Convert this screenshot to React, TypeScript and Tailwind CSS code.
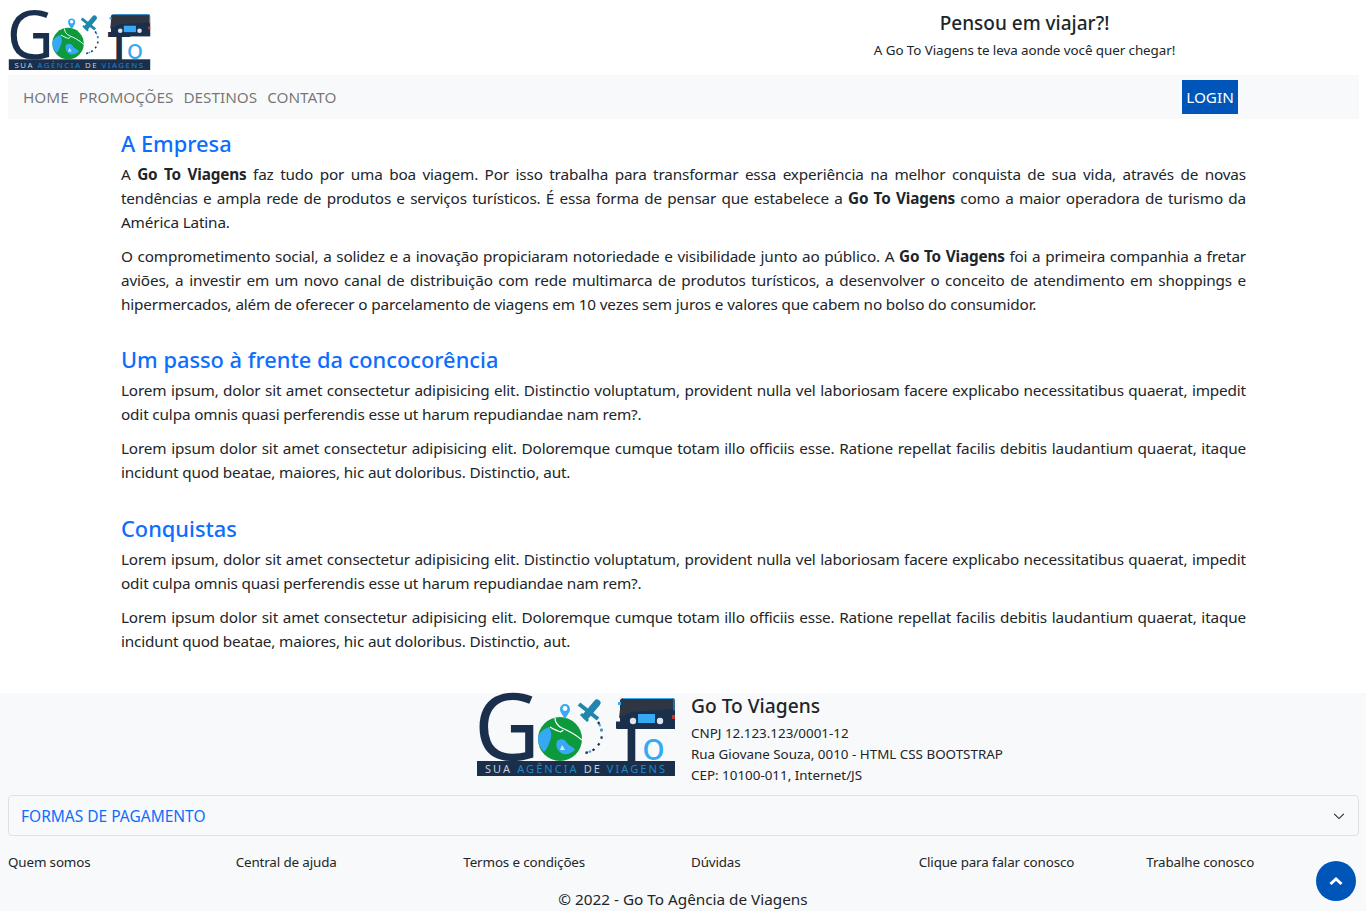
const lorem1 =
  "Lorem ipsum, dolor sit amet consectetur adipisicing elit. Distinctio voluptatum, provident nulla vel laboriosam facere explicabo necessitatibus quaerat, impedit odit culpa omnis quasi perferendis esse ut harum repudiandae nam rem?.";
const lorem2 =
  "Lorem ipsum dolor sit amet consectetur adipisicing elit. Doloremque cumque totam illo officiis esse. Ratione repellat facilis debitis laudantium quaerat, itaque incidunt quod beatae, maiores, hic aut doloribus. Distinctio, aut.";

const footerLinks = [
  "Quem somos",
  "Central de ajuda",
  "Termos e condições",
  "Dúvidas",
  "Clique para falar conosco",
  "Trabalhe conosco",
];

function Logo({ className }: { className: string }) {
  return (
    <svg viewBox="0 0 198 84" className={className}>
      <text x="-3" y="68" fontSize="94" fill="#1a2f4b" textLength="66" lengthAdjust="spacingAndGlyphs" fontFamily="Noto Sans, sans-serif">
        G
      </text>
      <text x="140" y="69" fontSize="52" fill="#1a2f4b" stroke="#1a2f4b" strokeWidth="3" fontFamily="Noto Sans, sans-serif">
        T
      </text>
      <rect x="140" y="32" width="58" height="5" fill="#1a2f4b" />
      <text x="165" y="68" fontSize="38" fill="#36a9f5" fontFamily="Noto Sans, sans-serif">
        o
      </text>
      {/* globe */}
      <circle cx="83" cy="47" r="22" fill="#0c9a3c" />
      <path d="M61 46c0-4 5-9 11-11 3 5 3 11 0 16-1 4-3 7-5 9-4-4-6-9-6-14z" fill="#36a9f5" />
      <path d="M80 49c4-3 8-2 10 2 2 3 7 4 8 7-3 3-8 5-12 4-5-2-8-8-6-13z" fill="#36a9f5" />
      <path d="M85 53l3 5-5 0z" fill="#dfe5ea" />
      <path d="M78 26c0 5 3 8 7 10 7 3 13 6 20 12M73 35c3 2 6 3 8 4 2 1 4 1 5-1" stroke="#fff" strokeWidth="1.3" fill="none" />
      {/* pin */}
      <path d="M88 27c-3-5-5-7-5-10a5 5 0 0 1 10 0c0 3-2 5-5 10z" fill="#36a9f5" />
      <circle cx="88" cy="16.5" r="2.4" fill="#fff" />
      {/* plane */}
      <path d="M109 24 120 11" stroke="#1f86ad" strokeWidth="7" strokeLinecap="round" />
      <path d="M102 12 121 27" stroke="#1f86ad" strokeWidth="4" />
      <path d="M104 22 111 29" stroke="#1f86ad" strokeWidth="3" />
      {/* route */}
      <path d="M121 30c5 7 5 16 1 22-3 5-8 8-14 9" stroke="#1a2f4b" strokeWidth="2.2" strokeDasharray="2.5 5" fill="none" />
      <path d="M122 32c2 3 3 6 3 9M114 59c-2 1-4 2-6 2" stroke="#36a9f5" strokeWidth="2.2" strokeDasharray="2.5 3" fill="none" />
      {/* bus */}
      <path d="M143 9c0-2 2-3 4-3h48c2 0 3 1 3 3v24h-55z" fill="#1a2f4b" />
      <path d="M144 9c0-1 1-2 3-2h48c1 0 2 1 2 2v8l-42 3-13 6z" fill="#2d3642" />
      <path d="M146 6.5h49c1 0 2 1 2 2v10" stroke="#36a9f5" strokeWidth="1" fill="none" />
      <rect x="161" y="22" width="17" height="9" fill="#36a9f5" />
      <rect x="141" y="10" width="3" height="3" fill="#36a9f5" />
      <circle cx="156" cy="29" r="3.2" fill="#dfe5ea" />
      <circle cx="183" cy="29" r="3.2" fill="#dfe5ea" />
      <rect x="195" y="23" width="3" height="4" fill="#c0392b" />
      {/* banner */}
      <rect x="0" y="69" width="198" height="15" fill="#1a2f4b" />
      <text x="8" y="81" fontSize="11" textLength="180" fontFamily="Noto Sans, sans-serif" fill="#c6d0da">
        SUA <tspan fill="#1f86c8">AGÊNCIA</tspan> DE <tspan fill="#1f86c8">VIAGENS</tspan>
      </text>
    </svg>
  );
}

function Section({ title, className, children }: { title: string; className: string; children: React.ReactNode }) {
  return (
    <section className={className}>
      <h3 className="text-[21.8px] leading-[28px] font-medium text-[#0d6efd] mb-1">{title}</h3>
      {children}
    </section>
  );
}

function P({ children }: { children: React.ReactNode }) {
  return <p className="mb-2.5 text-justify tracking-[-0.01em]">{children}</p>;
}

export default function App() {
  return (
    <div className="[font-family:'Noto_Sans',sans-serif] relative bg-white text-[15.3px] leading-6 text-[#212529] pb-2.5">
      <header className="grid grid-cols-2 h-[75px]">
        <div className="pl-2 pt-2.5">
          <Logo className="w-[143px] h-[60px]" />
        </div>
        <div className="text-center pt-[11px]">
          <h5 className="text-[19px] leading-6 font-medium">Pensou em viajar?!</h5>
          <p className="text-[13.4px] leading-[21px] mt-[5px] tracking-[-0.005em]">A Go To Viagens te leva aonde você quer chegar!</p>
        </div>
      </header>

      <nav className="ml-2 mr-[7px] h-11 bg-[#f8f9fa] flex items-center pl-[15px] pb-px">
        <ul className="flex gap-2.5 text-black/55">
          <li>HOME</li>
          <li>PROMOÇÕES</li>
          <li>DESTINOS</li>
          <li>CONTATO</li>
        </ul>
        <button className="ml-auto mr-[121px] w-14 h-[34px] bg-[#0056b8] text-white">LOGIN</button>
      </nav>

      <main className="ml-[121px] mr-[120px] pt-[11px] pb-[9px]">
        <Section title="A Empresa" className="mb-[30px]">
          <P>
            A <b>Go To Viagens</b> faz tudo por uma boa viagem. Por isso trabalha para transformar essa experiência na melhor conquista de sua vida, através de novas tendências e ampla rede de produtos e serviços turísticos. É essa forma de pensar que estabelece a <b>Go To Viagens</b> como a maior operadora de turismo da América Latina.
          </P>
          <P>
            O comprometimento social, a solidez e a inovação propiciaram notoriedade e visibilidade junto ao público. A <b>Go To Viagens</b> foi a primeira companhia a fretar aviões, a investir em um novo canal de distribuição com rede multimarca de produtos turísticos, a desenvolver o conceito de atendimento em shoppings e hipermercados, além de oferecer o parcelamento de viagens em 10 vezes sem juros e valores que cabem no bolso do consumidor.
          </P>
        </Section>
        <Section title="Um passo à frente da concocorência" className="mb-[31px]">
          <P>{lorem1}</P>
          <P>{lorem2}</P>
        </Section>
        <Section title="Conquistas" className="mb-[31px]">
          <P>{lorem1}</P>
          <P>{lorem2}</P>
        </Section>
      </main>

      <footer className="bg-[#f8f9fa] h-[218px]">
        <div className="grid grid-cols-2">
          <div className="flex justify-end pr-2">
            <Logo className="w-[198px] h-[84px] -mt-px" />
          </div>
          <div className="pl-2">
            <h5 className="text-[19.2px] leading-6 font-medium mt-[1px] mb-[5px]">Go To Viagens</h5>
            <p className="text-[13.4px] leading-[21px]">CNPJ 12.123.123/0001-12</p>
            <p className="text-[13.4px] leading-[21px]">Rua Giovane Souza, 0010 - HTML CSS BOOTSTRAP</p>
            <p className="text-[13.4px] leading-[21px]">CEP: 10100-011, Internet/JS</p>
          </div>
        </div>
        <div className="ml-2 mr-[7px] mt-[9px] h-[41px] border border-[#dfe1e4] rounded flex items-center justify-between pl-3 pr-3">
          <span className="text-[#0d6efd] text-[15.5px]">FORMAS DE PAGAMENTO</span>
          <svg viewBox="0 0 16 16" className="w-3.5 h-3.5" fill="none" stroke="#212529" strokeWidth="1.2">
            <path d="M2.5 5.5 8 11l5.5-5.5" />
          </svg>
        </div>
        <div className="grid grid-cols-6 text-[13.4px] leading-[21px] mt-4 tracking-[-0.01em]">
          {footerLinks.map((l) => (
            <div key={l} className="px-2">{l}</div>
          ))}
        </div>
        <p className="text-center mt-[14px]">© 2022 - Go To Agência de Viagens</p>
      </footer>

      <button className="absolute left-[1316px] top-[861px] w-10 h-10 rounded-full bg-[#0056b8] flex items-center justify-center">
        <svg viewBox="0 0 16 16" className="w-4 h-4" fill="none" stroke="#fff" strokeWidth="3">
          <path d="M2.5 11 8 6l5.5 5" />
        </svg>
      </button>
    </div>
  );
}
